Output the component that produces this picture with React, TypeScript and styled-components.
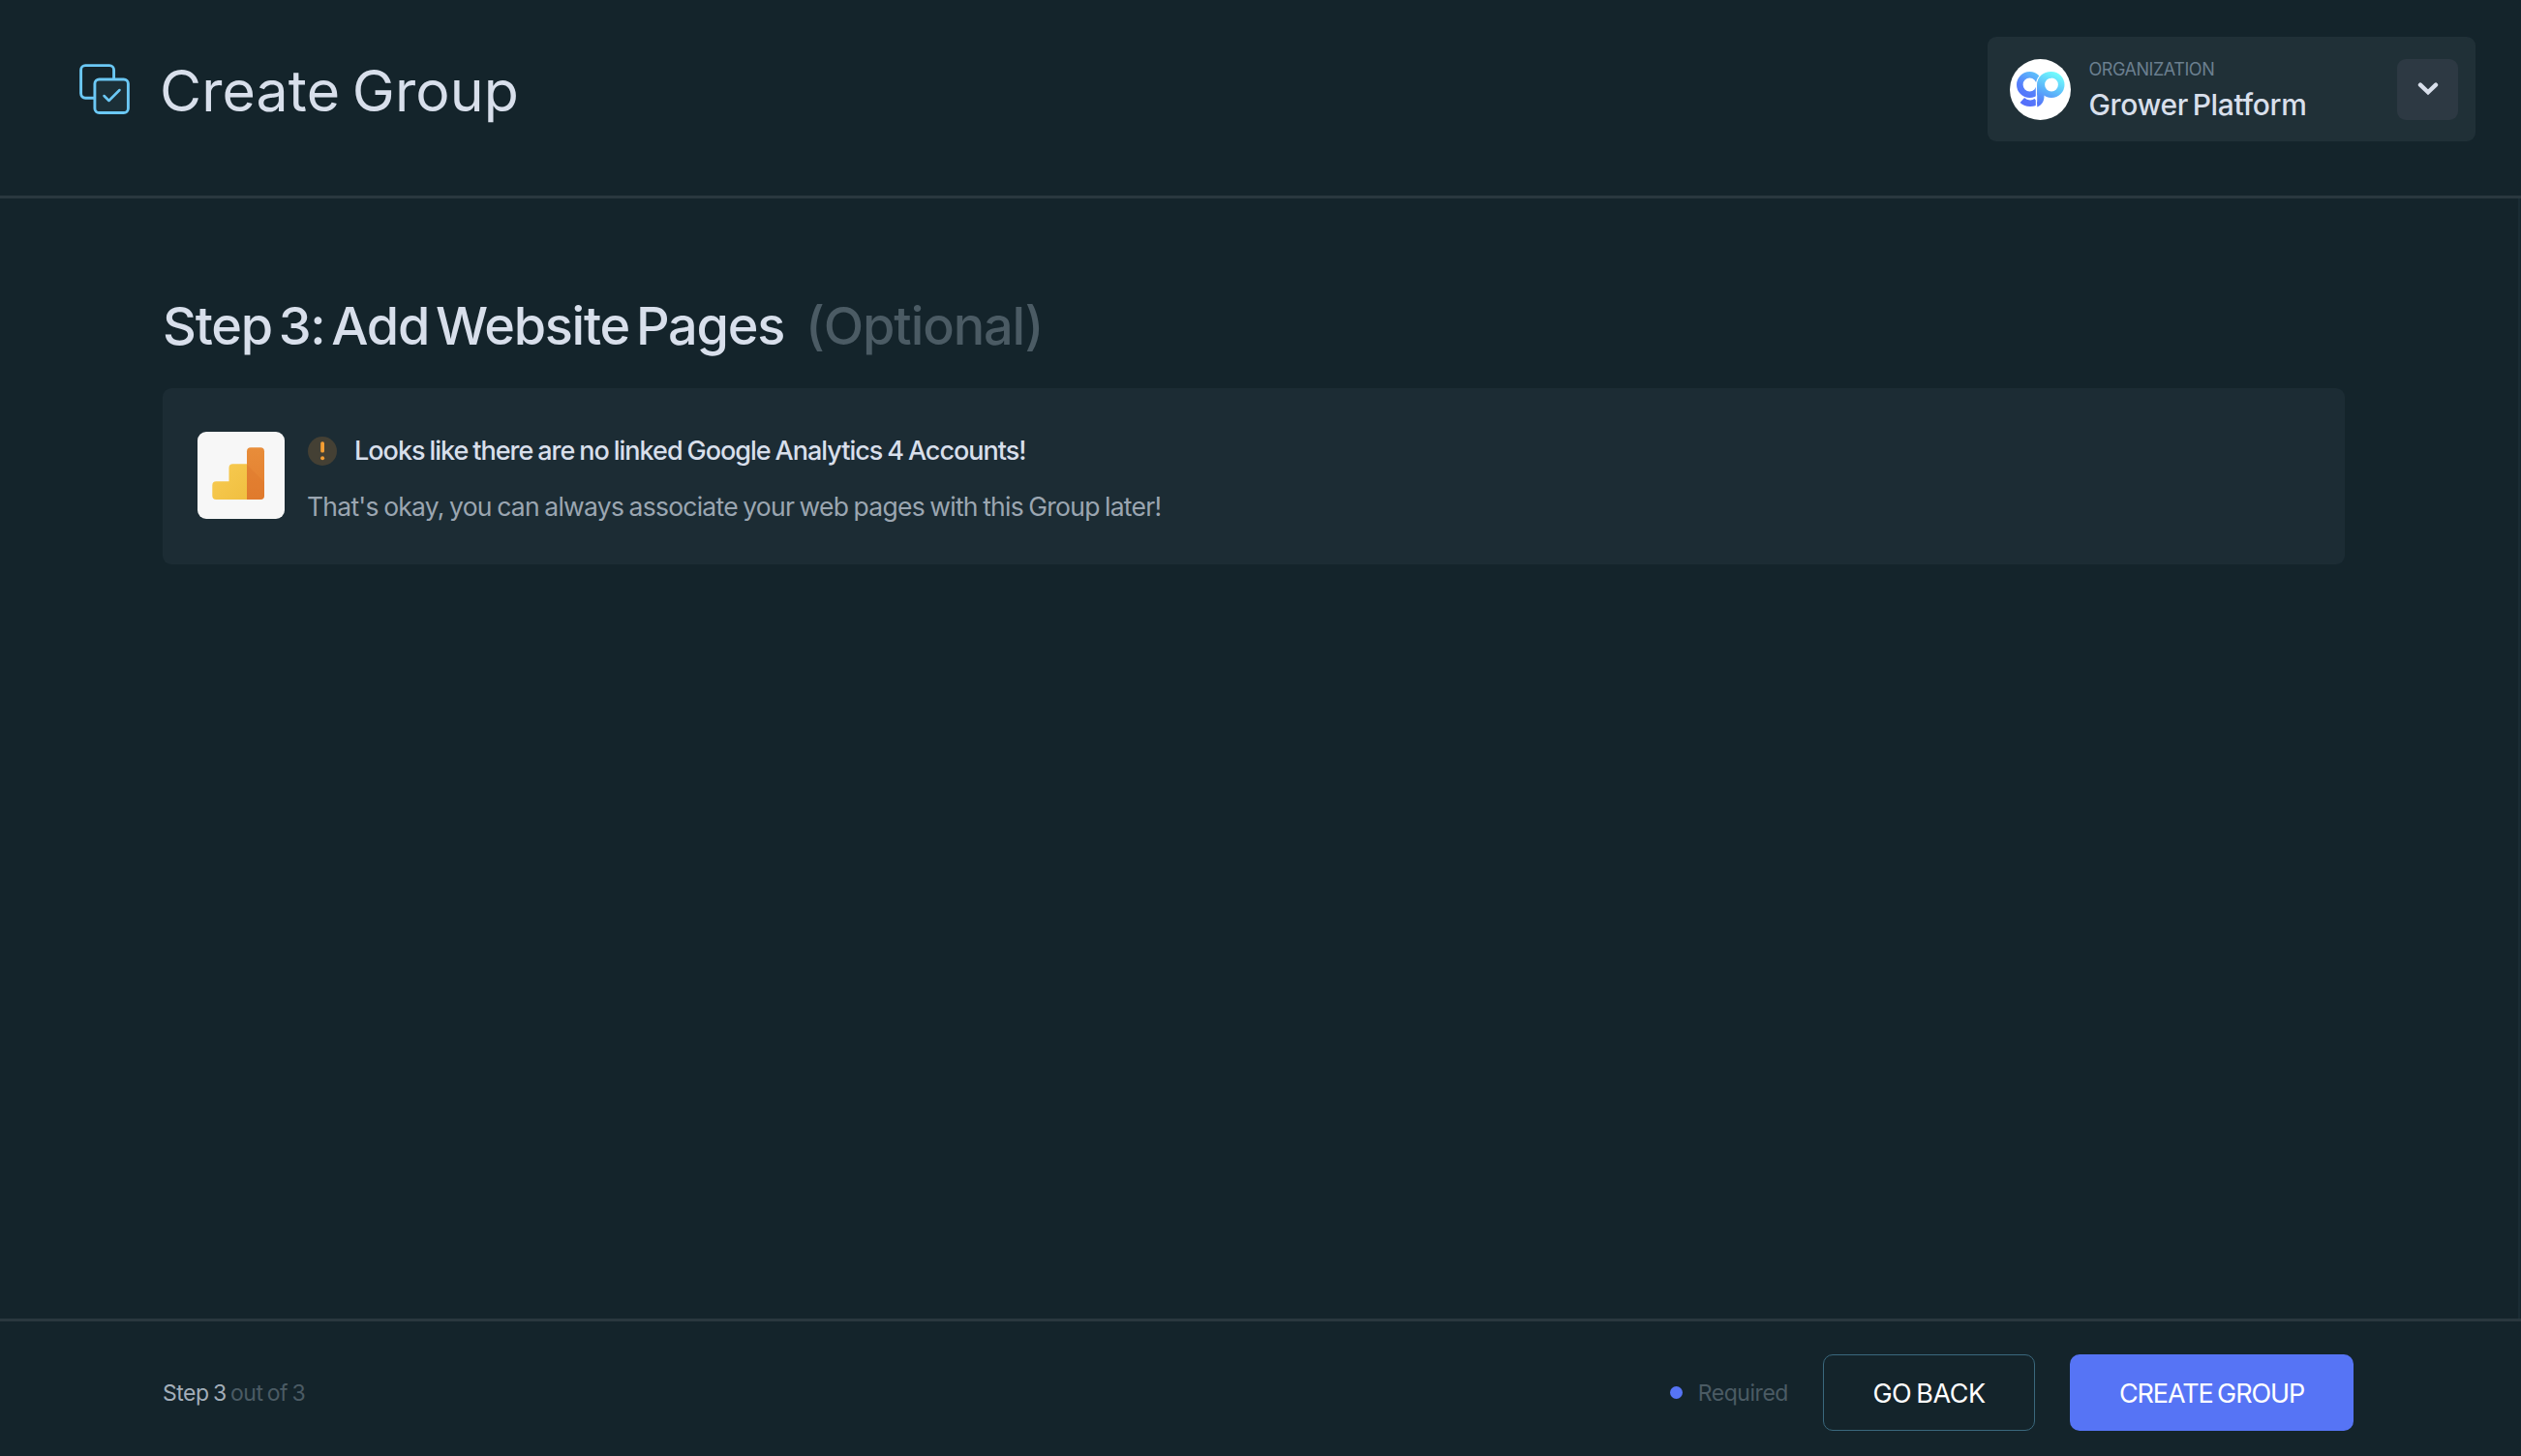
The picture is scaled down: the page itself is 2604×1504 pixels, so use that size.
import React from "react";
import styled, { createGlobalStyle } from "styled-components";

const GlobalStyle = createGlobalStyle`
  * { box-sizing: border-box; }
  body { margin: 0; background: #14242b; font-family: Inter, "Open Sans", sans-serif; }
  h1, h2, p { margin: 0; font-weight: 400; }
  button { font-family: inherit; cursor: pointer; }
`;

const Page = styled.div`
  display: flex;
  flex-direction: column;
  width: 100%;
  height: 1504px;
  overflow: hidden;
  background: #14242b;
  color: #d8dfeb;
`;

const Header = styled.header`
  display: flex;
  justify-content: space-between;
  align-items: flex-start;
  flex: none;
  height: 205px;
  padding: 38px 47px 0 82px;
  border-bottom: 3px solid #2a383f;
`;

const TitleGroup = styled.div`
  display: flex;
  align-items: center;
  height: 108px;
`;

const GroupIcon = styled.svg`
  flex: none;
  display: block;
  width: 52px;
  height: 52px;
`;

const PageTitle = styled.h1`
  margin-left: 31px;
  padding-top: 3px;
  font-size: 59px;
  font-weight: 430;
  line-height: 74px;
  letter-spacing: 0.1px;
  word-spacing: -4px;
  white-space: nowrap;
`;

const OrgSwitcher = styled.div`
  display: flex;
  align-items: center;
  width: 504px;
  height: 108px;
  padding: 0 18px 0 23px;
  border-radius: 9px;
  background: #203037;
`;

const OrgLogo = styled.svg`
  flex: none;
  display: block;
  width: 63px;
  height: 63px;
`;

const OrgText = styled.div`
  flex: 1;
  margin-left: 18.5px;
  padding-top: 1px;
  white-space: nowrap;
`;

const OrgLabel = styled.div`
  font-size: 18px;
  line-height: 24px;
  letter-spacing: -0.45px;
  color: #6b7f8f;
`;

const OrgName = styled.div`
  margin-top: 6px;
  font-size: 30px;
  font-weight: 450;
  line-height: 36px;
  letter-spacing: -0.35px;
  word-spacing: -3px;
`;

const OrgToggle = styled.button`
  display: grid;
  place-items: center;
  width: 63px;
  height: 63px;
  padding: 0;
  border: 0;
  border-radius: 9px;
  background: #2d3943;
`;

const Content = styled.main`
  flex: 1;
  min-height: 0;
  margin-right: 1px;
  padding: 101px 179px 0 168px;
  border-right: 2px solid #1a2c34;
`;

const StepHeading = styled.h2`
  display: flex;
  gap: 22px;
  height: 95px;
  font-size: 54px;
  font-weight: 450;
  line-height: 62px;
  letter-spacing: -1.25px;
  word-spacing: -6.3px;
  white-space: nowrap;
`;

const Optional = styled.span`
  letter-spacing: -1.1px;
  color: #4b5b64;
`;

const Notice = styled.section`
  display: flex;
  align-items: center;
  height: 182px;
  padding: 0 36px 2px;
  border-radius: 9px;
  background: #1c2c34;
`;

const AnalyticsTile = styled.div`
  display: grid;
  place-items: center;
  flex: none;
  width: 90px;
  height: 90px;
  border-radius: 9px;
  background: #f7f7f7;
`;

const NoticeBody = styled.div`
  margin-left: 24px;
  padding-top: 8px;
  line-height: 34px;
  white-space: nowrap;
`;

const NoticeTitle = styled.div`
  display: flex;
  align-items: center;
  gap: 18px;
  font-size: 27px;
  font-weight: 500;
  letter-spacing: -1px;
  word-spacing: -1.3px;
`;

const NoticeText = styled.p`
  margin: 23px 0 1px -1px;
  font-size: 26.5px;
  letter-spacing: -0.75px;
  word-spacing: -1.3px;
  color: #9ba6b1;
`;

const Footer = styled.footer`
  display: flex;
  align-items: center;
  flex: none;
  height: 142px;
  padding: 8px 173px 0 168px;
  border-top: 3px solid #2a383f;
`;

const StepCount = styled.div`
  flex: 1;
  padding-top: 1px;
  font-size: 23px;
  letter-spacing: -0.5px;
  word-spacing: -1.6px;
  color: #4b5b64;
`;

const CurrentStep = styled.span`
  color: #a3aeb9;
`;

const Legend = styled.div`
  display: flex;
  align-items: center;
  gap: 16px;
  margin-right: 36px;
  font-size: 23px;
  letter-spacing: -0.45px;
  color: #4b5b64;
`;

const Dot = styled.i`
  width: 13px;
  height: 13px;
  border-radius: 50%;
  background: #5674f5;
`;

const Action = styled.button<{ $primary?: boolean; $width: number }>`
  width: ${(p) => p.$width}px;
  height: 79px;
  margin-left: ${(p) => (p.$primary ? 36 : 0)}px;
  padding: 2px 0 0;
  border: ${(p) => (p.$primary ? "0" : "1px solid #3a687d")};
  border-radius: 10px;
  background: ${(p) => (p.$primary ? "#5674f5" : "transparent")};
  color: #fff;
  font-size: 27px;
  letter-spacing: ${(p) => (p.$primary ? -1.1 : -0.5)}px;
  word-spacing: -2px;
`;

export default function App() {
  return (
    <Page>
      <GlobalStyle />
      <Header>
        <TitleGroup>
          <GroupIcon viewBox="0 0 52 52" fill="none" stroke="#6bc8f5" strokeWidth="2.9" strokeLinecap="round" strokeLinejoin="round">
            <path d="M15.500 35.200H6.200a4.600 4.600 0 0 1-4.600-4.600V6.200a4.600 4.600 0 0 1 4.600-4.600h24.800a4.600 4.600 0 0 1 4.600 4.600v9.200" />
            <rect x="15.900" y="16" width="34.500" height="34.500" rx="4.600" fill="#1b2f37" />
            <path d="M25.500 33l5 5L41.500 27" strokeWidth="2.500" />
          </GroupIcon>
          <PageTitle>Create Group</PageTitle>
        </TitleGroup>
        <OrgSwitcher>
          <OrgLogo viewBox="0 0 63 63">
            <defs>
              <linearGradient id="gpLeft" gradientUnits="userSpaceOnUse" x1="12" y1="42" x2="30" y2="14">
                <stop offset="0" stopColor="#5570fa" />
                <stop offset="0.4" stopColor="#5580fb" />
                <stop offset="1" stopColor="#5fc8fb" />
              </linearGradient>
              <linearGradient id="gpRight" gradientUnits="userSpaceOnUse" x1="30" y1="46" x2="46" y2="14">
                <stop offset="0" stopColor="#5478fa" />
                <stop offset="0.45" stopColor="#5cb4fa" />
                <stop offset="1" stopColor="#70fbfd" />
              </linearGradient>
            </defs>
            <circle cx="31.500" cy="31.500" r="31.500" fill="#fff" />
            <g fill="none" strokeWidth="6.600">
              <circle cx="20.500" cy="26.500" r="10.200" stroke="url(#gpLeft)" />
              <path d="M12.800 42.500c4.500 4.200 11.800 4.200 15 .8" stroke="url(#gpLeft)" />
              <circle cx="43" cy="26.500" r="10.200" stroke="url(#gpRight)" />
            </g>
            <path d="M27.500 50V27c0-8 6-13.500 14-13.500" fill="none" stroke="#fff" strokeWidth="1.400" />
            <path d="M28.200 49.500V27c0-8.500 6-14 14.500-14v6.800c-4.600 0-7.200 2.800-7.200 7.200v11c0 6-2.500 9.500-7.300 11.500z" fill="url(#gpRight)" />
          </OrgLogo>
          <OrgText>
            <OrgLabel>ORGANIZATION</OrgLabel>
            <OrgName>Grower Platform</OrgName>
          </OrgText>
          <OrgToggle aria-label="Switch organization">
            <svg width="22" height="15" viewBox="0 0 22 15" fill="none" stroke="#d8dfeb" strokeWidth="4.400" strokeLinecap="round" strokeLinejoin="miter">
              <path d="M3 2.700l8 7.600 8-7.600" />
            </svg>
          </OrgToggle>
        </OrgSwitcher>
      </Header>
      <Content>
        <StepHeading>
          <span>Step 3: Add Website Pages</span>
          <Optional>(Optional)</Optional>
        </StepHeading>
        <Notice>
          <AnalyticsTile>
            <svg width="90" height="90" viewBox="0 0 90 90">
              <defs>
                <linearGradient id="gaYellow" x1="0" y1="0" x2="1" y2="1">
                  <stop offset="0" stopColor="#f8cb52" />
                  <stop offset="1" stopColor="#f0bf40" />
                </linearGradient>
                <linearGradient id="gaOrange" x1="0" y1="0" x2="0" y2="1">
                  <stop offset="0" stopColor="#e88d3a" />
                  <stop offset="1" stopColor="#e37d2e" />
                </linearGradient>
              </defs>
              <path d="M52 33.300H36.500a4 4 0 0 0-4 4v14H19.300a4 4 0 0 0-4 4V66a4 4 0 0 0 4 4H52z" fill="url(#gaYellow)" />
              <path d="M51 20.300a4 4 0 0 1 4-4h10a4 4 0 0 1 4 4V66a4 4 0 0 1-4 4H51z" fill="url(#gaOrange)" />
              <path d="M51 34l18 18v14a4 4 0 0 1-4 4H51z" fill="#d9742a" opacity="0.3" />
            </svg>
          </AnalyticsTile>
          <NoticeBody>
            <NoticeTitle>
              <svg width="30" height="30" viewBox="0 0 30 30">
                <circle cx="15" cy="15" r="15" fill="#444034" />
                <rect x="13.200" y="5.300" width="3.800" height="11.200" rx="1.600" fill="#f59e33" />
                <circle cx="15.100" cy="22.300" r="2" fill="#f59e33" />
              </svg>
              <span>Looks like there are no linked Google Analytics 4 Accounts!</span>
            </NoticeTitle>
            <NoticeText>That's okay, you can always associate your web pages with this Group later!</NoticeText>
          </NoticeBody>
        </Notice>
      </Content>
      <Footer>
        <StepCount>
          <CurrentStep>Step 3</CurrentStep> out of 3
        </StepCount>
        <Legend>
          <Dot />
          <span>Required</span>
        </Legend>
        <Action $width={219}>GO BACK</Action>
        <Action $primary $width={293}>CREATE GROUP</Action>
      </Footer>
    </Page>
  );
}
